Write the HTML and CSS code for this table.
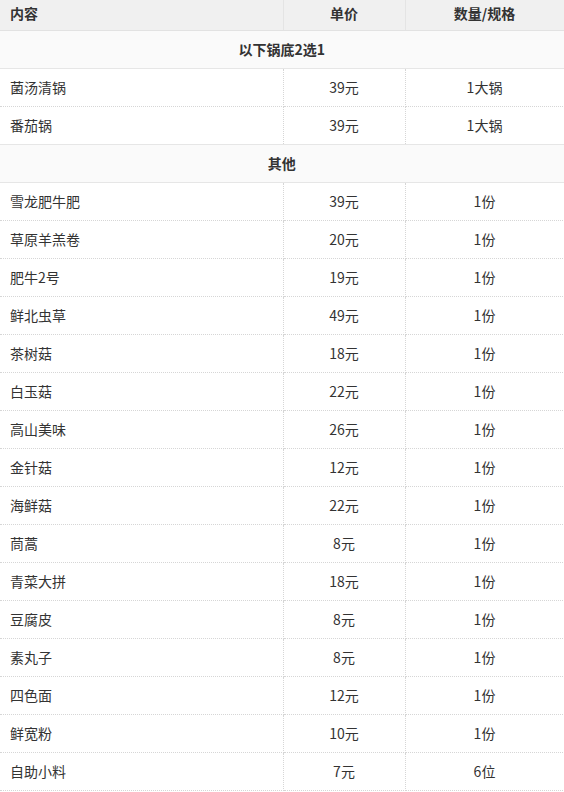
FILE: index.html
```html
<!DOCTYPE html>
<html lang="zh-CN">
<head>
<meta charset="utf-8">
<link rel="stylesheet" href="styles.css">
</head>
<body>
<table class="menu">
  <colgroup><col class="c1"><col class="c2"><col class="c3"></colgroup>
  <thead>
    <tr><th class="left">内容</th><th>单价</th><th>数量/规格</th></tr>
  </thead>
  <tbody>
    <tr class="section"><td colspan="3">以下锅底2选1</td></tr>
    <tr><td class="left">菌汤清锅</td><td>39元</td><td>1大锅</td></tr>
    <tr><td class="left">番茄锅</td><td>39元</td><td>1大锅</td></tr>
    <tr class="section"><td colspan="3">其他</td></tr>
    <tr><td class="left">雪龙肥牛肥</td><td>39元</td><td>1份</td></tr>
    <tr><td class="left">草原羊羔卷</td><td>20元</td><td>1份</td></tr>
    <tr><td class="left">肥牛2号</td><td>19元</td><td>1份</td></tr>
    <tr><td class="left">鲜北虫草</td><td>49元</td><td>1份</td></tr>
    <tr><td class="left">茶树菇</td><td>18元</td><td>1份</td></tr>
    <tr><td class="left">白玉菇</td><td>22元</td><td>1份</td></tr>
    <tr><td class="left">高山美味</td><td>26元</td><td>1份</td></tr>
    <tr><td class="left">金针菇</td><td>12元</td><td>1份</td></tr>
    <tr><td class="left">海鲜菇</td><td>22元</td><td>1份</td></tr>
    <tr><td class="left">茼蒿</td><td>8元</td><td>1份</td></tr>
    <tr><td class="left">青菜大拼</td><td>18元</td><td>1份</td></tr>
    <tr><td class="left">豆腐皮</td><td>8元</td><td>1份</td></tr>
    <tr><td class="left">素丸子</td><td>8元</td><td>1份</td></tr>
    <tr><td class="left">四色面</td><td>12元</td><td>1份</td></tr>
    <tr><td class="left">鲜宽粉</td><td>10元</td><td>1份</td></tr>
    <tr><td class="left">自助小料</td><td>7元</td><td>6位</td></tr>
  </tbody>
</table>
</body>
</html>
```
FILE: styles.css
```css
html, body {
  margin: 0;
  padding: 0;
  background: #fff;
}
.menu {
  border-collapse: collapse;
  table-layout: fixed;
  width: 564px;
  font-family: "Noto Sans CJK SC", "Microsoft YaHei", sans-serif;
  font-size: 14px;
  color: #333;
}
.c1 { width: 283px; }
.c2 { width: 122px; }
.c3 { width: 159px; }
.menu th {
  height: 30px;
  padding: 0 10px 4px;
  box-sizing: border-box;
  background: #f0f0f0;
  font-weight: bold;
  text-align: center;
  border-bottom: 1px solid #e2e2e2;
  border-left: 1px solid #e4e4e4;
  border-right: 1px solid #e4e4e4;
  line-height: 20px;
  vertical-align: middle;
}
.menu th:first-child { border-left: none; }
.menu td {
  height: 38px;
  padding: 0 10px;
  box-sizing: border-box;
  text-align: center;
  line-height: 20px;
  border: 1px dotted #d6d6d6;
  vertical-align: middle;
}
.menu td:first-child { border-left: none; }
.menu .left { text-align: left; }
.menu .section td {
  background: #fafafa;
  font-weight: bold;
  border-top: 1px solid #e6e6e6;
  border-bottom: 1px solid #e6e6e6;
}
```
